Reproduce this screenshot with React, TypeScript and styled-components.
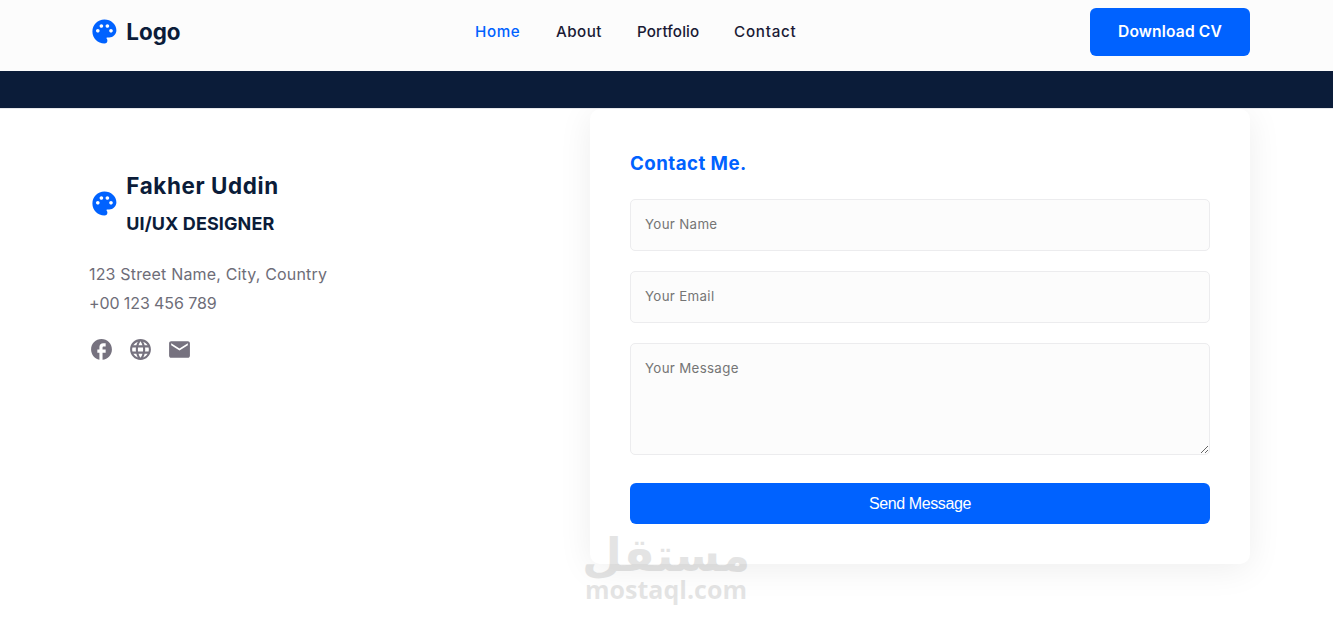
import React from "react";

import styled, { createGlobalStyle } from "styled-components";
import { MdEmail, MdFacebook, MdLanguage, MdPalette } from "react-icons/md";

const GlobalStyle = createGlobalStyle`
  * {
    margin: 0;
    padding: 0;
    box-sizing: border-box;
  }
  body {
    height: 617px;
    overflow: hidden;
    background: #fff;
    font-family: Inter, "Open Sans", sans-serif;
  }
`;

const Page = styled.div`
  position: relative;
  height: 617px;
  overflow: hidden;
`;

const Header = styled.header`
  height: 71px;
  padding: 8px 83px 0 90px;
  background: #fcfcfc;
  display: grid;
  grid-template-columns: 385px 1fr 160px;
  align-items: start;
`;

const Brand = styled.div`
  display: flex;
  align-items: center;
  gap: 8px;
  height: 47px;
  margin-left: -0.5px;
  color: #0b1c39;
  svg {
    color: #0062ff;
    flex-shrink: 0;
  }
`;

const BrandName = styled.h2<{ $spacing?: string }>`
  font-size: 22.4px;
  line-height: 36px;
  font-weight: 700;
  white-space: nowrap;
  letter-spacing: ${(props) => props.$spacing || "0"};
`;

const BrandRole = styled.h4`
  padding-top: 2px;
  font-size: 18px;
  line-height: 36px;
  font-weight: 700;
  white-space: nowrap;
  letter-spacing: 0.1px;
`;

const Nav = styled.nav`
  display: flex;
  gap: 35px;
  height: 47px;
  align-items: center;
`;

const NavLink = styled.a<{
  $active?: boolean;
  $width: number;
  $spacing: number;
}>`
  width: ${(props) => props.$width}px;
  color: ${(props) => (props.$active ? "#0062ff" : "#1a1a35")};
  font-size: 15.2px;
  font-weight: 500;
  white-space: nowrap;
  letter-spacing: ${(props) => props.$spacing}px;
`;

const DownloadButton = styled.a`
  display: flex;
  align-items: center;
  justify-content: center;
  height: 48px;
  padding-bottom: 1px;
  border-radius: 6px;
  background: #0062ff;
  color: #fff;
  font-size: 15.6px;
  font-weight: 600;
  white-space: nowrap;
  letter-spacing: 0.15px;
`;

const Banner = styled.div`
  height: 38px;
  background: #0b1c39;
  border-bottom: 1px solid #e6e6ea;
`;

const ContactSection = styled.section`
  display: grid;
  grid-template-columns: 500px 660px;
  padding-left: 90px;
  height: 508px;
  overflow: hidden;
`;

const Info = styled.div`
  padding-top: 59px;
  color: #6e6d78;
`;

const InfoBrand = styled(Brand)`
  height: 72px;
  align-items: flex-start;
  svg {
    margin-top: 21px;
  }
`;

const Address = styled.div`
  margin-top: 20px;
  margin-left: -1px;
  font-size: 16px;
  line-height: 29px;
`;

const AddressLine = styled.p<{ $spacing: number }>`
  letter-spacing: ${(props) => props.$spacing}px;
`;

const Socials = styled.div`
  display: flex;
  gap: 14px;
  margin-top: 19px;
  margin-left: -1px;
  color: #76727f;
`;

const Form = styled.form`
  display: flex;
  flex-direction: column;
  height: 455px;
  padding: 40px;
  border-radius: 10px;
  background: #fff;
  box-shadow: 0 5px 35px rgba(0, 0, 0, 0.07);
`;

const FormTitle = styled.h3`
  margin-bottom: 20px;
  color: #0062ff;
  font-size: 18.7px;
  line-height: 30px;
  font-weight: 700;
  letter-spacing: 0.45px;
`;

const Field = styled.input`
  height: 52px;
  margin-bottom: 20px;
  padding: 14px 15px 16px 14px;
  border: 1px solid #ececee;
  border-radius: 5px;
  background: #fcfcfc;
  font-family: inherit;
  font-size: 13.3px;
  letter-spacing: 0.33px;
  &::placeholder {
    color: #757575;
  }
`;

const MessageField = styled(Field).attrs({ as: "textarea" })`
  height: 112px;
  margin-bottom: 28px;
  line-height: 20px;
  resize: vertical;
`;

const SendButton = styled.button`
  height: 41px;
  border: none;
  border-radius: 6px;
  background: #0062ff;
  color: #fff;
  font-family: "Liberation Sans", Arial, sans-serif;
  font-size: 16px;
  letter-spacing: -0.4px;
`;

const Watermark = styled.svg`
  position: absolute;
  left: 580px;
  top: 522px;
  opacity: 0.1;
`;

const App = () => {
  return (
    <Page>
      <GlobalStyle />
      <Header>
        <Brand>
          <MdPalette size={28.8} />
          <BrandName>Logo</BrandName>
        </Brand>
        <Nav>
          <NavLink $active $width={46} $spacing={0.6}>Home</NavLink>
          <NavLink $width={46} $spacing={0.45}>About</NavLink>
          <NavLink $width={62} $spacing={0.15}>Portfolio</NavLink>
          <NavLink $width={63} $spacing={0.75}>Contact</NavLink>
        </Nav>
        <DownloadButton>Download CV</DownloadButton>
      </Header>

      <Banner />

      <ContactSection>
        <Info>
          <InfoBrand>
            <MdPalette size={28.8} />
            <div>
              <BrandName $spacing="0.62px">Fakher Uddin</BrandName>
              <BrandRole>UI/UX DESIGNER</BrandRole>
            </div>
          </InfoBrand>
          <Address>
            <AddressLine $spacing={0.17}>
              123 Street Name, City, Country
            </AddressLine>
            <AddressLine $spacing={-0.1}>+00 123 456 789</AddressLine>
          </Address>
          <Socials>
            <MdFacebook size={25} />
            <MdLanguage size={25} />
            <MdEmail size={25} />
          </Socials>
        </Info>

        <Form>
          <FormTitle>Contact Me.</FormTitle>
          <Field type="text" placeholder="Your Name" />
          <Field type="email" placeholder="Your Email" />
          <MessageField placeholder="Your Message" />
          <SendButton type="button">Send Message</SendButton>
        </Form>
      </ContactSection>

      <Watermark width="172" height="90">
        <text
          x="86"
          y="49"
          textAnchor="middle"
          fontFamily="DejaVu Sans, sans-serif"
          fontWeight="700"
          fontSize="46"
        >
          مستقل
        </text>
        <text
          x="5"
          y="77"
          textLength="162"
          fontFamily="Open Sans, sans-serif"
          fontWeight="700"
          fontSize="25"
        >
          mostaql.com
        </text>
      </Watermark>
    </Page>
  );
};

export default App;
